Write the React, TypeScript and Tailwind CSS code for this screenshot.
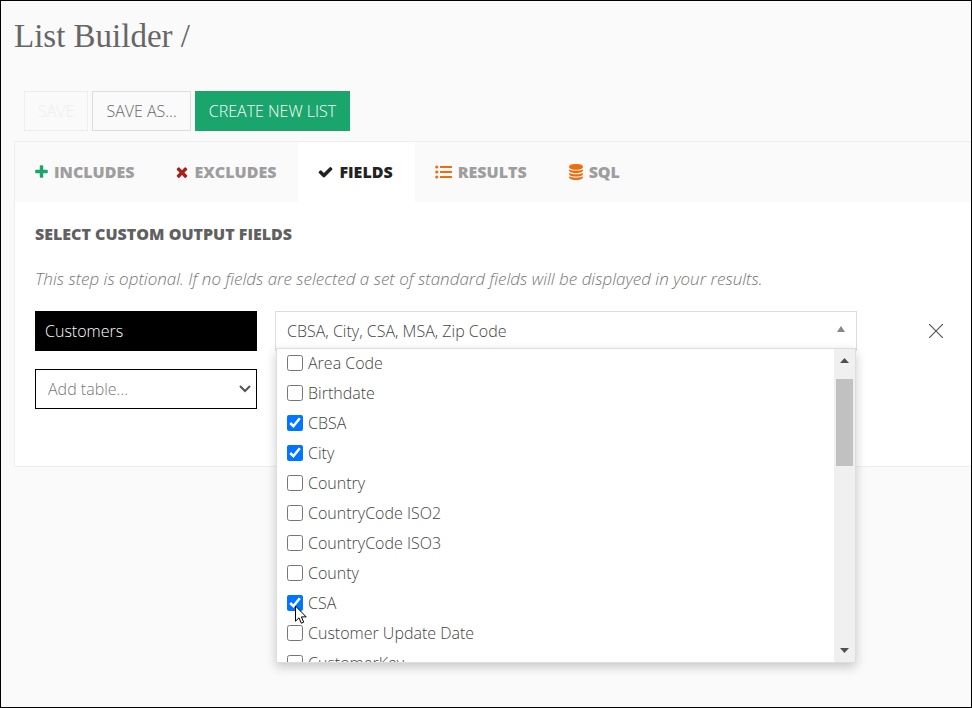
import type { ReactNode } from "react";

type TabProps = {
	label: string;
	icon: ReactNode;
	active?: boolean;
};

const fields = [
	{ name: "Area Code", checked: false },
	{ name: "Birthdate", checked: false },
	{ name: "CBSA", checked: true },
	{ name: "City", checked: true },
	{ name: "Country", checked: false },
	{ name: "CountryCode ISO2", checked: false },
	{ name: "CountryCode ISO3", checked: false },
	{ name: "County", checked: false },
	{ name: "CSA", checked: true },
	{ name: "Customer Update Date", checked: false },
	{ name: "CustomerKey", checked: false },
];

function PlusIcon() {
	return (
		<svg viewBox="192 0 1408 1792" className="h-4 w-[13px] fill-[#1aa56c]">
			<path d="M1600 736v192q0 40-28 68t-68 28h-416v416q0 40-28 68t-68 28h-192q-40 0-68-28t-28-68v-416h-416q-40 0-68-28t-28-68v-192q0-40 28-68t68-28h416v-416q0-40 28-68t68-28h192q40 0 68 28t28 68v416h416q40 0 68 28t28 68z" />
		</svg>
	);
}

function TimesIcon() {
	return (
		<svg viewBox="280 0 1232 1792" className="h-4 w-3 fill-[#a8201a]">
			<path d="M1490 1322q0 40-28 68l-136 136q-28 28-68 28t-68-28l-294-294-294 294q-28 28-68 28t-68-28l-136-136q-28-28-28-68t28-68l294-294-294-294q-28-28-28-68t28-68l136-136q28-28 68-28t68 28l294 294 294-294q28-28 68-28t68 28l136 136q28 28 28 68t-28 68l-294 294 294 294q28 28 28 68z" />
		</svg>
	);
}

function CheckIcon() {
	return (
		<svg viewBox="100 0 1592 1792" className="h-4 w-[15px] fill-[#222222]">
			<path d="M1671 566q0 40-28 68l-724 724-136 136q-28 28-68 28t-68-28l-136-136-362-362q-28-28-28-68t28-68l136-136q28-28 68-28t68 28l294 295 656-657q28-28 68-28t68 28l136 136q28 28 28 68z" />
		</svg>
	);
}

function ListIcon() {
	return (
		<svg viewBox="0 0 17 16" className="h-4 w-[17px] fill-[#f26c0d]">
			<circle cx="1.8" cy="3" r="1.6" />
			<circle cx="1.8" cy="8" r="1.6" />
			<circle cx="1.8" cy="13" r="1.6" />
			<rect x="5" y="2" width="12" height="2" rx="0.3" />
			<rect x="5" y="7" width="12" height="2" rx="0.3" />
			<rect x="5" y="12" width="12" height="2" rx="0.3" />
		</svg>
	);
}

function DatabaseIcon() {
	return (
		<svg viewBox="128 0 1536 1792" className="h-4 w-[14px] fill-[#f26c0d]">
			<path d="M896 768q237 0 443-43t325-127v170q0 69-103 128t-280 93.5-385 34.5-385-34.5-280-93.5-103-128v-170q119 84 325 127t443 43zm0 768q237 0 443-43t325-127v170q0 69-103 128t-280 93.5-385 34.5-385-34.5-280-93.5-103-128v-170q119 84 325 127t443 43zm0-384q237 0 443-43t325-127v170q0 69-103 128t-280 93.5-385 34.5-385-34.5-280-93.5-103-128v-170q119 84 325 127t443 43zm0-1152q208 0 385 34.5t280 93.5 103 128v128q0 69-103 128t-280 93.5-385 34.5-385-34.5-280-93.5-103-128v-128q0-69 103-128t280-93.5 385-34.5z" />
		</svg>
	);
}

function Tab({ label, icon, active = false }: TabProps) {
	return (
		<button
			type="button"
			role="tab"
			aria-selected={active}
			className={
				active
					? "flex h-[60px] items-center gap-1.5 bg-white pr-[22px] pl-5 font-extrabold text-[#222222]"
					: "flex h-[60px] items-center gap-1.5 pr-[22px] pl-5 font-extrabold text-[#9e9e9e]"
			}
		>
			{icon}
			{label}
		</button>
	);
}

function FieldMenu() {
	return (
		<div className="absolute inset-x-px top-[37px] flex h-[315px] border border-[#dddddd] bg-white shadow-[0_4px_10px_rgba(0,0,0,0.2)]">
			<ul className="flex-1 overflow-hidden pl-2.5">
				{fields.map((field) => (
					<li key={field.name} className="first:-mt-px">
						<label className="flex h-[30px] items-center gap-[5px]">
							<input
								type="checkbox"
								defaultChecked={field.checked}
								className="size-4"
							/>
							{field.name}
						</label>
					</li>
				))}
			</ul>
			{/* scrollbar */}
			<div className="flex w-[21px] flex-col items-center bg-[#f0f0f0] py-[9px]">
				<svg viewBox="0 0 9 5" className="h-[5px] w-[9px] fill-[#505050]">
					<path d="M0 5 4.500 0 9 5z" />
				</svg>
				<div className="mt-4 h-[87px] w-[17px] bg-[#c1c1c1]" />
				<svg viewBox="0 0 9 5" className="mt-auto h-[5px] w-[9px] fill-[#505050]">
					<path d="M0 0h9L4.500 5z" />
				</svg>
			</div>
			{/* mouse pointer */}
			<svg
				viewBox="0 0 12 19"
				className="absolute top-64 left-[18px] h-[19px] w-3"
			>
				<path
					d="M.5 1v15.200l3.500-3.400 2.300 5.400 2.400-1-2.300-5.300h4.800z"
					fill="#fff"
					stroke="#000"
				/>
			</svg>
		</div>
	);
}

export default function App() {
	return (
		<div className="min-h-screen border border-black bg-[#fafafa] pl-[13px] font-['Open_Sans',sans-serif] text-base font-light text-[#444444]">
			<h1 className="pt-3 font-['Liberation_Serif',serif] text-[33px] leading-[46px] font-normal text-[#666666]">
				List Builder /
			</h1>

			{/* actions */}
			<div className="mt-8 flex gap-1 pl-2.5">
				<button
					type="button"
					disabled
					className="h-10 border border-[#eeeeee] px-[13px] text-[#eeeeee]"
				>
					SAVE
				</button>
				<button
					type="button"
					className="h-10 border border-[#dddddd] px-[13px] text-[#666666]"
				>
					SAVE AS...
				</button>
				<button type="button" className="h-10 bg-[#1aa56c] px-3.5 text-white">
					CREATE NEW LIST
				</button>
			</div>

			<main className="mt-2.5 border-y border-l border-[#eeeeee] bg-white">
				<div role="tablist" className="flex bg-[#fafafa]">
					<Tab label="INCLUDES" icon={<PlusIcon />} />
					<Tab label="EXCLUDES" icon={<TimesIcon />} />
					<Tab label="FIELDS" icon={<CheckIcon />} active />
					<Tab label="RESULTS" icon={<ListIcon />} />
					<Tab label="SQL" icon={<DatabaseIcon />} />
				</div>

				<section className="pt-5 pr-[27px] pb-[57px] pl-5">
					<h2 className="leading-6 font-extrabold text-[#606060]">
						SELECT CUSTOM OUTPUT FIELDS
					</h2>
					<p className="mt-[21px] text-[17px] leading-6 text-[#777777] italic">
						This step is optional. If no fields are selected a set of standard
						fields will be displayed in your results.
					</p>

					<div className="mt-5 flex items-start gap-[18px]">
						<div className="flex w-[222px] flex-col gap-[18px]">
							<div className="flex h-10 items-center bg-black px-2.5 text-white">
								Customers
							</div>
							<div className="relative">
								<select
									aria-label="Add table"
									className="h-10 w-full appearance-none border border-black bg-white px-3 text-[#777777]"
								>
									<option>Add table...</option>
								</select>
								<svg
									viewBox="0 0 12 8"
									className="pointer-events-none absolute top-4 right-1.5 h-2 w-3"
									fill="none"
									stroke="#555"
									strokeWidth="2"
								>
									<path d="M1 1l5 5 5-5" />
								</svg>
							</div>
						</div>

						<div className="relative flex-1">
							<button
								type="button"
								aria-expanded="true"
								className="flex h-10 w-full items-center justify-between border border-[#dddddd] bg-white px-[11px]"
							>
								CBSA, City, CSA, MSA, Zip Code
								<svg viewBox="0 0 8 10" className="h-2.5 w-2 fill-[#888888]">
									<path d="M0 6 4 0l4 6z" />
								</svg>
							</button>
							<FieldMenu />
						</div>

						<button
							type="button"
							aria-label="Remove table"
							className="ml-[53px] flex h-10 w-4 items-center justify-center"
						>
							<svg
								viewBox="0 0 14 14"
								className="size-3.5"
								stroke="#555"
								strokeWidth="1.200"
							>
								<path d="M0 0l14 14M14 0L0 14" />
							</svg>
						</button>
					</div>
				</section>
			</main>
		</div>
	);
}
